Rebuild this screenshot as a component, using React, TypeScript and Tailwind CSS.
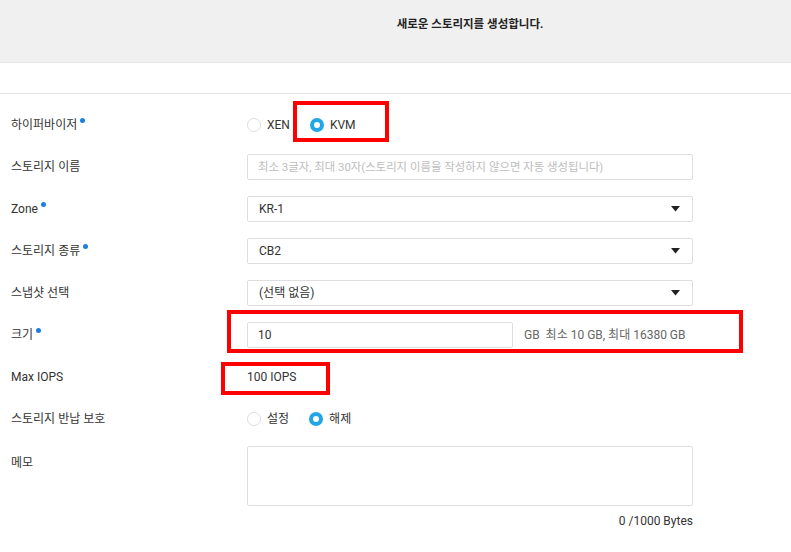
import React from "react";

function Req() {
  return <span className="ml-[3px] inline-block h-[5px] w-[5px] -translate-y-[5px] rounded-full bg-[#1a7fe0]" />;
}

function Radio({ checked, label }: { checked?: boolean; label: string }) {
  return (
    <label className="flex items-center gap-[6px]">
      {checked ? (
        <span className="flex h-[14px] w-[14px] items-center justify-center rounded-full bg-[#22a7e6]">
          <span className="h-[6px] w-[6px] rounded-full bg-white" />
        </span>
      ) : (
        <span className="h-[14px] w-[14px] rounded-full border border-[#dcdcdc] bg-white" />
      )}
      <span className="text-[12px] text-[#333]">{label}</span>
    </label>
  );
}

function Select({ value }: { value: string }) {
  return (
    <div className="flex h-[26px] w-[446px] items-center justify-between rounded-[2px] border border-[#dedede] bg-white pl-[11px] pr-[12px] text-[12px] text-[#333]">
      <span>{value}</span>
      <svg width="9" height="6" viewBox="0 0 9 6">
        <path d="M0 0h9L4.5 5.5z" fill="#222" />
      </svg>
    </div>
  );
}

function Row({
  label,
  required,
  children,
}: {
  label: string;
  required?: boolean;
  children: React.ReactNode;
}) {
  return (
    <div className="relative flex h-[42px] items-center">
      <div className="flex w-[236px] items-center text-[12px] text-[#333]">
        {label}
        {required && <Req />}
      </div>
      <div className="flex flex-1 items-center">{children}</div>
    </div>
  );
}

export default function App() {
  return (
    <div className="min-h-[552px] w-[791px] bg-white font-['Roboto','Noto_Sans_CJK_KR',sans-serif]">
      <div className="flex h-[63px] justify-center border-b border-[#e6e6e6] bg-[#f0f0f0] pl-[149px] pt-[16px]">
        <h1 className="text-[11.5px] font-bold text-[#222]">새로운 스토리지를 생성합니다.</h1>
      </div>
      <div className="h-[31px] border-b border-[#e2e2e2]" />

      <div className="pl-[11px] pt-[10px]">
        <Row label="하이퍼바이저" required>
          <div className="flex items-center gap-[20px]">
            <Radio label="XEN" />
            <Radio checked label="KVM" />
          </div>
          <div className="pointer-events-none absolute left-[282px] top-[-3px] h-[41px] w-[96px] border-[4px] border-[#ff0000]" />
        </Row>
        <Row label="스토리지 이름">
          <input
            className="h-[26px] w-[446px] rounded-[2px] border border-[#dedede] px-[10px] text-[11.4px] text-[#333] outline-none placeholder:text-[#bdbdbd]"
            placeholder="최소 3글자, 최대 30자(스토리지 이름을 작성하지 않으면 자동 생성됩니다)"
          />
        </Row>
        <Row label="Zone" required>
          <Select value="KR-1" />
        </Row>
        <Row label="스토리지 종류" required>
          <Select value="CB2" />
        </Row>
        <Row label="스냅샷 선택">
          <Select value="(선택 없음)" />
        </Row>
        <Row label="크기" required>
          <input
            className="h-[26px] w-[266px] rounded-[2px] border border-[#dedede] px-[10px] text-[12px] text-[#333] outline-none"
            defaultValue="10"
          />
          <span className="ml-[11px] text-[12px] text-[#666]">GB&nbsp; 최소 10 GB, 최대 16380 GB</span>
          <div className="pointer-events-none absolute left-[216px] top-[-4px] h-[43px] w-[516px] border-[4px] border-[#ff0000]" />
        </Row>
        <Row label="Max IOPS">
          <span className="text-[12px] text-[#333]">100 IOPS</span>
          <div className="pointer-events-none absolute left-[210px] top-[6px] h-[33px] w-[109px] border-[4px] border-[#ff0000]" />
        </Row>
        <Row label="스토리지 반납 보호">
          <div className="flex items-center gap-[20px]">
            <Radio label="설정" />
            <Radio checked label="해제" />
          </div>
        </Row>
        <div className="flex pt-[6px]">
          <div className="w-[236px] pt-[8px] text-[12px] text-[#333]">메모</div>
          <div className="flex w-[446px] flex-col items-end">
            <textarea className="h-[60px] w-[446px] resize-none rounded-[2px] border border-[#dedede] outline-none" />
            <span className="mt-[6px] text-[12px] text-[#333]">0 /1000 Bytes</span>
          </div>
        </div>
      </div>
    </div>
  );
}
